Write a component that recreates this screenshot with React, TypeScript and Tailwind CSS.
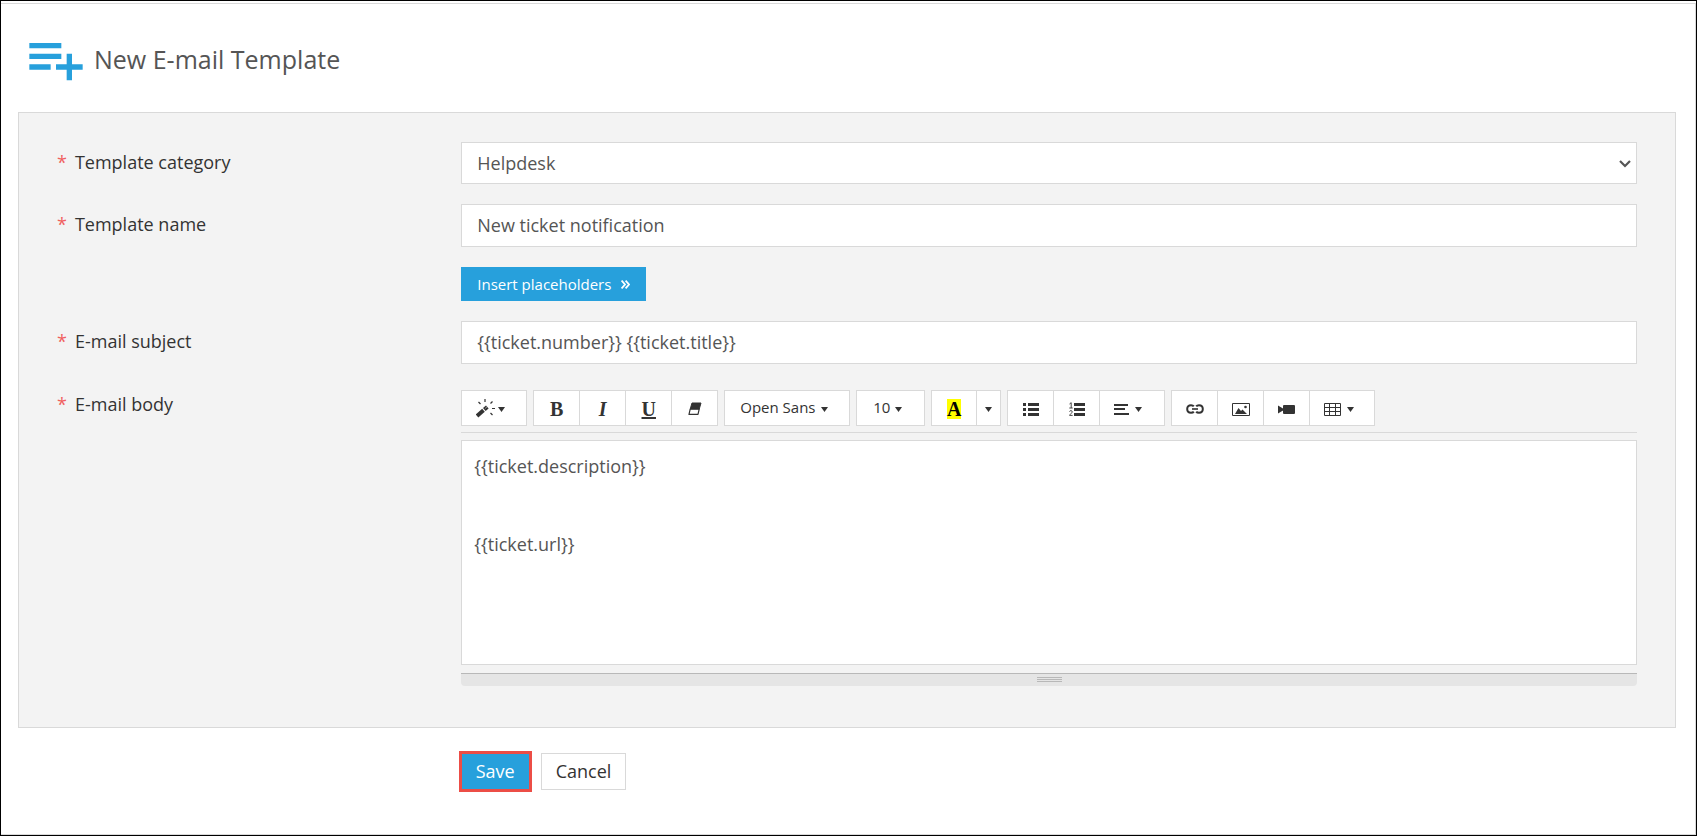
import type { ReactNode } from "react";

function Caret({ className = "block" }: { className?: string }) {
  return (
    <svg width="7" height="5" viewBox="0 0 7 5" className={className} aria-hidden="true">
      <path d="M0 0h7L3.5 5z" fill="currentColor" />
    </svg>
  );
}

function Label({ text, target }: { text: string; target: string }) {
  return (
    <label htmlFor={target} className="flex gap-2 pt-2 pr-5 pl-[21px] text-lg leading-6 text-[#333]">
      <span className="text-[#f0605e]">*</span>
      {text}
    </label>
  );
}

function Group({ children }: { children: ReactNode }) {
  return <div className="flex divide-x divide-[#d9d9d9] border border-[#d9d9d9] bg-white">{children}</div>;
}

function Tool({ title, children, size = "w-[46px]" }: { title: string; children: ReactNode; size?: string }) {
  return (
    <button type="button" aria-label={title} className={`${size} flex h-[34px] items-center justify-center pt-0.5 text-[#333]`}>
      {children}
    </button>
  );
}

function MenuTool({ title, children }: { title: string; children: ReactNode }) {
  return (
    <button type="button" aria-label={title} className="flex h-[34px] w-16 items-center gap-1.5 pt-0.5 pl-[14px] text-[#333]">
      {children}
      <Caret />
    </button>
  );
}

function WandIcon() {
  return (
    <svg width="19" height="20" viewBox="0 0 19 20" fill="none" stroke="currentColor" aria-hidden="true">
      <path d="M1 18L7.500 12.300" strokeWidth="4" />
      <path d="M8.300 11.600L11.300 9" strokeWidth="4" />
      <path d="M9.300 10.300L10.800 9" strokeWidth="1" stroke="#bbb" />
      <path d="M9 1v3M2.500 4l2 2M16.500 3.500l-2 2M16 10.500h3M14.500 15l2 2" strokeWidth="1.200" />
    </svg>
  );
}

function EraserIcon() {
  return (
    <svg width="14" height="14" viewBox="0 0 14 14" aria-hidden="true">
      <path d="M4 1h9l-1.800 6.200H2.200z" fill="currentColor" stroke="currentColor" strokeWidth="1" strokeLinejoin="round" />
      <path d="M2.200 7.200h9L10 12.400H1z" fill="#fff" stroke="currentColor" strokeWidth="1.200" strokeLinejoin="round" />
    </svg>
  );
}

function BulletIcon() {
  return (
    <svg width="16" height="14" viewBox="0 0 16 14" fill="currentColor" aria-hidden="true">
      <path d="M0 1h3v3H0zM0 6h3v3H0zM0 11h3v3H0zM5 1h11v3H5zM5 6h11v3H5zM5 11h11v3H5z" />
    </svg>
  );
}

function NumberedIcon() {
  return (
    <svg width="16" height="14" viewBox="0 0 16 14" fill="currentColor" aria-hidden="true">
      <path d="M5 1h11v3H5zM5 6h11v3H5zM5 11h11v3H5z" />
      <path d="M.5 2L2.200.7V6M.3 6h3.400M.5 9.600C.9 8.200 3.300 8.300 3.200 9.800 3.100 11 1.200 12 .6 13.400h3" fill="none" stroke="currentColor" strokeWidth="0.900" />
    </svg>
  );
}

function AlignIcon() {
  return (
    <svg width="15" height="12" viewBox="0 0 15 12" fill="currentColor" aria-hidden="true">
      <path d="M0 1h14v2H0zM0 5h11v2H0zM0 10h15v2H0z" />
    </svg>
  );
}

function LinkIcon() {
  return (
    <svg width="18" height="10" viewBox="0 0 18 10" fill="none" stroke="currentColor" aria-hidden="true">
      <path d="M7.800 2.400C7.200 1.500 6.300 1.200 5 1.200 2.600 1.200 1.200 2.600 1.200 5S2.600 8.800 5 8.800c1.300 0 2.200-.3 2.800-1.200M10.200 2.400c.6-.9 1.500-1.200 2.800-1.200 2.400 0 3.800 1.400 3.800 3.800S15.400 8.800 13 8.800c-1.300 0-2.200-.3-2.800-1.200" strokeWidth="2" />
      <path d="M6 5h6" strokeWidth="1.600" />
    </svg>
  );
}

function PictureIcon() {
  return (
    <svg width="18" height="13" viewBox="0 0 18 13" aria-hidden="true">
      <path d="M.5.5h17v12H.5z" fill="none" stroke="currentColor" />
      <path d="M3 11L6.500 5l2.500 3 1.500-1.500L15 11z" fill="currentColor" />
      <circle cx="13.500" cy="4" r="1.300" fill="currentColor" />
    </svg>
  );
}

function VideoIcon() {
  return (
    <svg width="17" height="9" viewBox="0 0 17 9" fill="currentColor" aria-hidden="true">
      <path d="M0 .5l5 3v2l-5 3zM6 0h10q1 0 1 1v7q0 1-1 1H6q-1 0-1-1V1q0-1 1-1z" />
    </svg>
  );
}

function TableIcon() {
  return (
    <svg width="17" height="13" viewBox="0 0 17 13" fill="none" stroke="currentColor" aria-hidden="true">
      <path d="M.5.5h16v12H.5zM.5 4.500h16M.5 8.500h16M5.500 0v13M11.500 0v13" />
    </svg>
  );
}

const field = "block w-full border border-[#d9d9d9] bg-white px-[15px] text-lg text-[#555] outline-none";
const row = "grid grid-cols-[1fr_3fr]";

export default function App() {
  return (
    <div className="min-h-screen border border-black bg-white pt-0.5 font-['Open_Sans',sans-serif]">
      <form className="flex min-h-[calc(100vh-4px)] flex-col border-t border-r border-b border-[#d9d9d9] pr-[19px] pl-[17px]">
        <header className="flex h-[108px] items-center gap-1.5 pt-0.5 pl-1.5">
          <svg width="64" height="64" viewBox="0 0 24 24" fill="#27a0dc" aria-hidden="true">
            <path d="M14 10H2v2h12v-2zm0-4H2v2h12V6zm4 8v-4h-2v4h-4v2h4v4h2v-4h4v-2h-4zM2 16h8v-2H2v2z" />
          </svg>
          <h1 className="text-[25px] leading-9 text-[#555]">New E-mail Template</h1>
        </header>

        <main className="flex flex-col gap-5 border border-[#d9d9d9] bg-[#f3f3f3] pt-[29px] pr-[18px] pb-[41px] pl-[17px]">
          <div className={row}>
            <Label text="Template category" target="category" />
            <div className="relative px-5">
              <select id="category" className={`${field} h-[42px] appearance-none`} defaultValue="Helpdesk">
                <option>Helpdesk</option>
              </select>
              <svg width="12" height="8" viewBox="0 0 12 8" className="pointer-events-none absolute top-[18px] right-[26px]" fill="none" stroke="#555" strokeWidth="2.200" aria-hidden="true">
                <path d="M1 1l5 5 5-5" />
              </svg>
            </div>
          </div>

          <div className={row}>
            <Label text="Template name" target="name" />
            <div className="px-5">
              <input id="name" className={`${field} h-[43px] pb-0.5`} defaultValue="New ticket notification" />
            </div>
          </div>

          <div className={row}>
            <div className="col-start-2 px-5">
              <button type="button" className="flex h-[34px] items-center gap-[10px] bg-[#27a0dc] px-4 text-[15px] text-white">
                Insert placeholders
                <svg width="9" height="9" viewBox="0 0 9 9" fill="none" stroke="currentColor" strokeWidth="1.800" aria-hidden="true">
                  <path d="M.6.6L4 4.500.6 8.400M4.600.6L8 4.500 4.600 8.400" />
                </svg>
              </button>
            </div>
          </div>

          <div className={row}>
            <Label text="E-mail subject" target="subject" />
            <div className="px-5">
              <input id="subject" className={`${field} h-[43px] pb-0.5`} defaultValue="{{ticket.number}} {{ticket.title}}" />
            </div>
          </div>

          <div className={row}>
            <Label text="E-mail body" target="body" />
            <div className="px-5 pt-1.5">
              <div role="toolbar" aria-label="Formatting" className="flex flex-wrap gap-1.5 border-b border-[#d9d9d9] pb-1.5">
                <Group>
                  <button type="button" aria-label="Style" className="flex h-[34px] w-16 items-center gap-[3px] pl-3.5 text-[#333]">
                    <WandIcon />
                    <Caret className="mt-0.5 block" />
                  </button>
                </Group>
                <Group>
                  <Tool title="Bold"><span className="font-['Liberation_Serif',serif] text-xl font-bold">B</span></Tool>
                  <Tool title="Italic"><span className="font-['Liberation_Serif',serif] text-xl font-bold italic">I</span></Tool>
                  <Tool title="Underline"><span className="font-['Liberation_Serif',serif] text-xl font-bold underline">U</span></Tool>
                  <Tool title="Remove formatting" size="w-[45px]"><EraserIcon /></Tool>
                </Group>
                <Group>
                  <button type="button" aria-label="Font family" className="flex h-[34px] w-[124px] items-center gap-[5px] pb-px pl-[15px] text-[15px] text-[#333]">
                    Open Sans
                    <Caret className="mt-1 block" />
                  </button>
                </Group>
                <Group>
                  <button type="button" aria-label="Font size" className="flex h-[34px] w-[67px] items-center gap-[5px] pb-px pl-4 text-[15px] text-[#333]">
                    10
                    <Caret className="mt-1 block" />
                  </button>
                </Group>
                <Group>
                  <Tool title="Highlight colour" size="w-[45px]">
                    <span className="bg-[#ff0] font-['Liberation_Serif',serif] text-xl leading-5 font-bold text-black">A</span>
                  </Tool>
                  <Tool title="More colours" size="w-[23px]"><Caret /></Tool>
                </Group>
                <Group>
                  <Tool title="Bulleted list"><BulletIcon /></Tool>
                  <Tool title="Numbered list"><NumberedIcon /></Tool>
                  <MenuTool title="Paragraph"><AlignIcon /></MenuTool>
                </Group>
                <Group>
                  <Tool title="Link"><LinkIcon /></Tool>
                  <Tool title="Picture"><PictureIcon /></Tool>
                  <Tool title="Video"><VideoIcon /></Tool>
                  <MenuTool title="Table"><TableIcon /></MenuTool>
                </Group>
              </div>
              <textarea
                id="body"
                className="mt-[7px] block h-[225px] w-full resize-none border border-[#d9d9d9] bg-white px-3 py-3 text-lg leading-[26px] text-[#555] outline-none"
                defaultValue={"{{ticket.description}}\n\n\n{{ticket.url}}"}
              />
              <div className="mt-2 flex h-[13px] flex-col items-center gap-px rounded-b border-t border-[#b8b8b8] bg-[#e5e5e5] pt-[3px]">
                <i className="h-px w-[25px] bg-[#b8b8b8]" />
                <i className="h-px w-[25px] bg-[#b8b8b8]" />
                <i className="h-px w-[25px] bg-[#b8b8b8]" />
              </div>
            </div>
          </div>
        </main>

        <footer className="grid grid-cols-[1fr_3fr] pt-[25px] pr-[18px] pl-[17px]">
          <div className="col-start-2 flex gap-[11px] px-5">
            <button type="submit" className="h-[37px] border border-[#ec4d46] bg-[#27a0dc] px-[14px] pb-0.5 text-lg leading-6 text-white outline-2 outline-[#ec4d46]">
              Save
            </button>
            <button type="button" className="h-[37px] border border-[#d9d9d9] bg-white px-[14px] pb-0.5 text-lg leading-6 text-[#333]">
              Cancel
            </button>
          </div>
        </footer>
      </form>
    </div>
  );
}
